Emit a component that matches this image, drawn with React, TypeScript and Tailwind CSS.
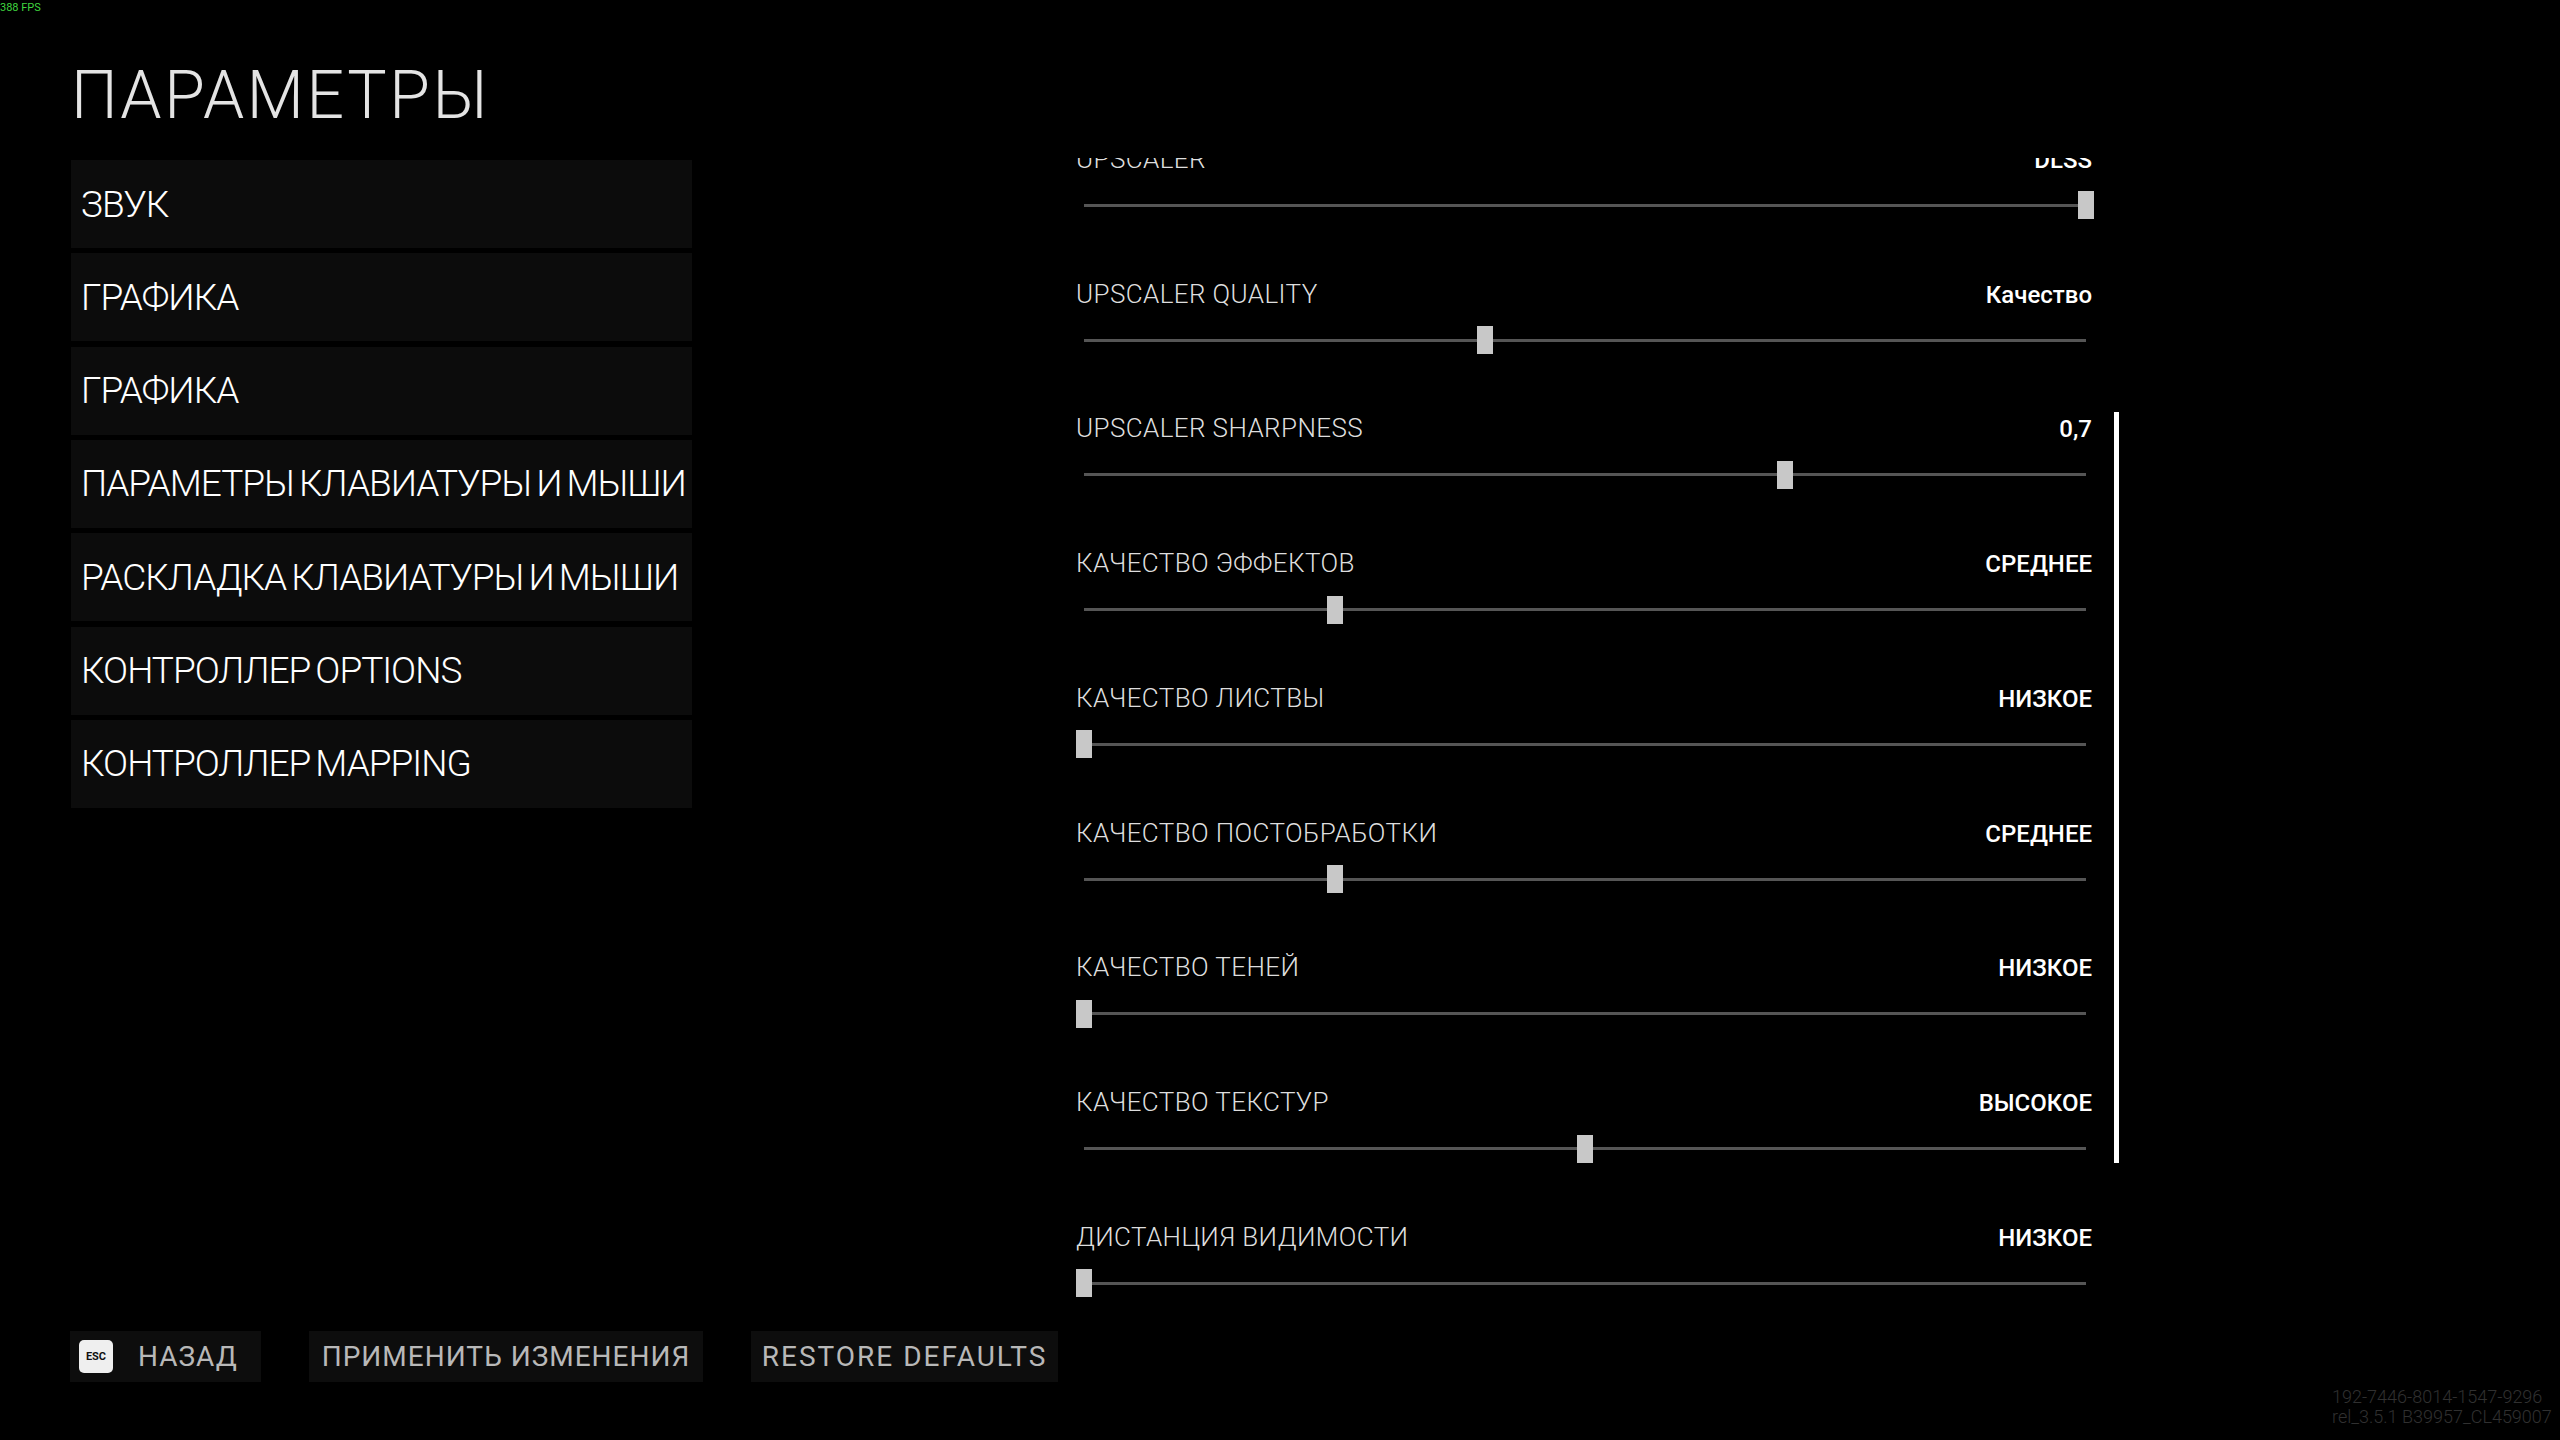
import React from 'react';

const menu = [
  'ЗВУК',
  'ГРАФИКА',
  'ГРАФИКА',
  'ПАРАМЕТРЫ КЛАВИАТУРЫ И МЫШИ',
  'РАСКЛАДКА КЛАВИАТУРЫ И МЫШИ',
  'КОНТРОЛЛЕР OPTIONS',
  'КОНТРОЛЛЕР MAPPING',
];

const rows = [
  { label: 'UPSCALER', value: 'DLSS', pos: 1 },
  { label: 'UPSCALER QUALITY', value: 'Качество', pos: 0.4 },
  { label: 'UPSCALER SHARPNESS', value: '0,7', pos: 0.7 },
  { label: 'КАЧЕСТВО ЭФФЕКТОВ', value: 'СРЕДНЕЕ', pos: 0.25 },
  { label: 'КАЧЕСТВО ЛИСТВЫ', value: 'НИЗКОЕ', pos: 0 },
  { label: 'КАЧЕСТВО ПОСТОБРАБОТКИ', value: 'СРЕДНЕЕ', pos: 0.25 },
  { label: 'КАЧЕСТВО ТЕНЕЙ', value: 'НИЗКОЕ', pos: 0 },
  { label: 'КАЧЕСТВО ТЕКСТУР', value: 'ВЫСОКОЕ', pos: 0.5 },
  { label: 'ДИСТАНЦИЯ ВИДИМОСТИ', value: 'НИЗКОЕ', pos: 0 },
];

function SliderRow({ label, value, pos }: { label: string; value: string; pos: number }) {
  return (
    <div className="h-[134.75px] shrink-0 pt-[20px]">
      <div className="flex h-[26px] items-baseline justify-between pr-[2px]">
        <span className="text-[26px] leading-[26px] font-light tracking-[0.4px] text-[#dedede] whitespace-nowrap">{label}</span>
        <span className="text-[24px] leading-[26px] font-medium text-white whitespace-nowrap">{value}</span>
      </div>
      <div className="mt-[19.4px] flex h-[28px] items-center px-[8px]">
        <div className="relative h-[3px] flex-1 bg-[#555555]">
          <div
            className="absolute top-[-12.5px] h-[28px] w-[16px] bg-[#c8c8c8]"
            style={{ left: `calc(${pos * 100}% - 8px)` }}
          />
        </div>
      </div>
    </div>
  );
}

export default function App() {
  return (
    <div className="relative flex h-[1440px] w-[2560px] flex-col overflow-hidden bg-black font-[Roboto,'Noto_Sans',sans-serif]">
      <div className="absolute left-0 top-[1px] text-[11px] leading-[14px] text-[#3fd43f]">388 FPS</div>

      <div className="flex h-[1331px] shrink-0">
        <div className="ml-[71px] w-[621px] shrink-0 pt-[63px]">
          <h1 className="h-[66px] text-[66px] leading-[66px] font-light tracking-[2.6px] text-[#e4e4e4]">ПАРАМЕТРЫ</h1>
          <div className="mt-[31px] flex flex-col gap-[5.33px]">
            {menu.map((m, i) => (
              <div key={i} className="flex h-[88px] items-center overflow-hidden bg-[#0c0c0c] pl-[10px]">
                <span className="text-[37px] leading-[37px] font-light tracking-[-1px] [word-spacing:-3px] text-white whitespace-nowrap">{m}</span>
              </div>
            ))}
          </div>
        </div>

        <div className="ml-[384px] mt-[158px] flex h-[1162px] shrink-0 gap-[20px]">
          <div className="h-[1162px] w-[1018px] overflow-hidden">
            <div className="mt-[-32.1px] flex flex-col">
              {rows.map((r, i) => (
                <SliderRow key={i} {...r} />
              ))}
            </div>
          </div>
          <div className="flex w-[5px] flex-col">
            <div className="h-[254px] shrink-0" />
            <div className="h-[751px] w-[5px] bg-white" />
          </div>
        </div>
      </div>

      <div className="ml-[70px] flex h-[51px] shrink-0 gap-[48px]">
        <div className="flex h-[51px] w-[191px] items-center bg-[#0d0d0d] pl-[9px]">
          <div className="flex h-[33px] w-[34px] items-center justify-center rounded-[5px] bg-[#efefef]">
            <span className="text-[11px] leading-none font-bold text-[#111]">ESC</span>
          </div>
          <span className="ml-[25px] text-[28px] leading-[28px] tracking-[1px] text-[#b8b8b8]">НАЗАД</span>
        </div>
        <div className="flex h-[51px] w-[394px] items-center justify-center bg-[#0d0d0d]">
          <span className="text-[28px] leading-[28px] tracking-[1px] text-[#b8b8b8] whitespace-nowrap">ПРИМЕНИТЬ ИЗМЕНЕНИЯ</span>
        </div>
        <div className="flex h-[51px] w-[307px] items-center justify-center bg-[#0d0d0d]">
          <span className="text-[28px] leading-[28px] tracking-[2px] text-[#b8b8b8] whitespace-nowrap">RESTORE DEFAULTS</span>
        </div>
      </div>

      <div className="absolute left-[2332px] top-[1387px] text-[18px] leading-[20px] font-light text-[#303030]">
        <div>192-7446-8014-1547-9296</div>
        <div>rel_3.5.1 B39957_CL459007</div>
      </div>
    </div>
  );
}
